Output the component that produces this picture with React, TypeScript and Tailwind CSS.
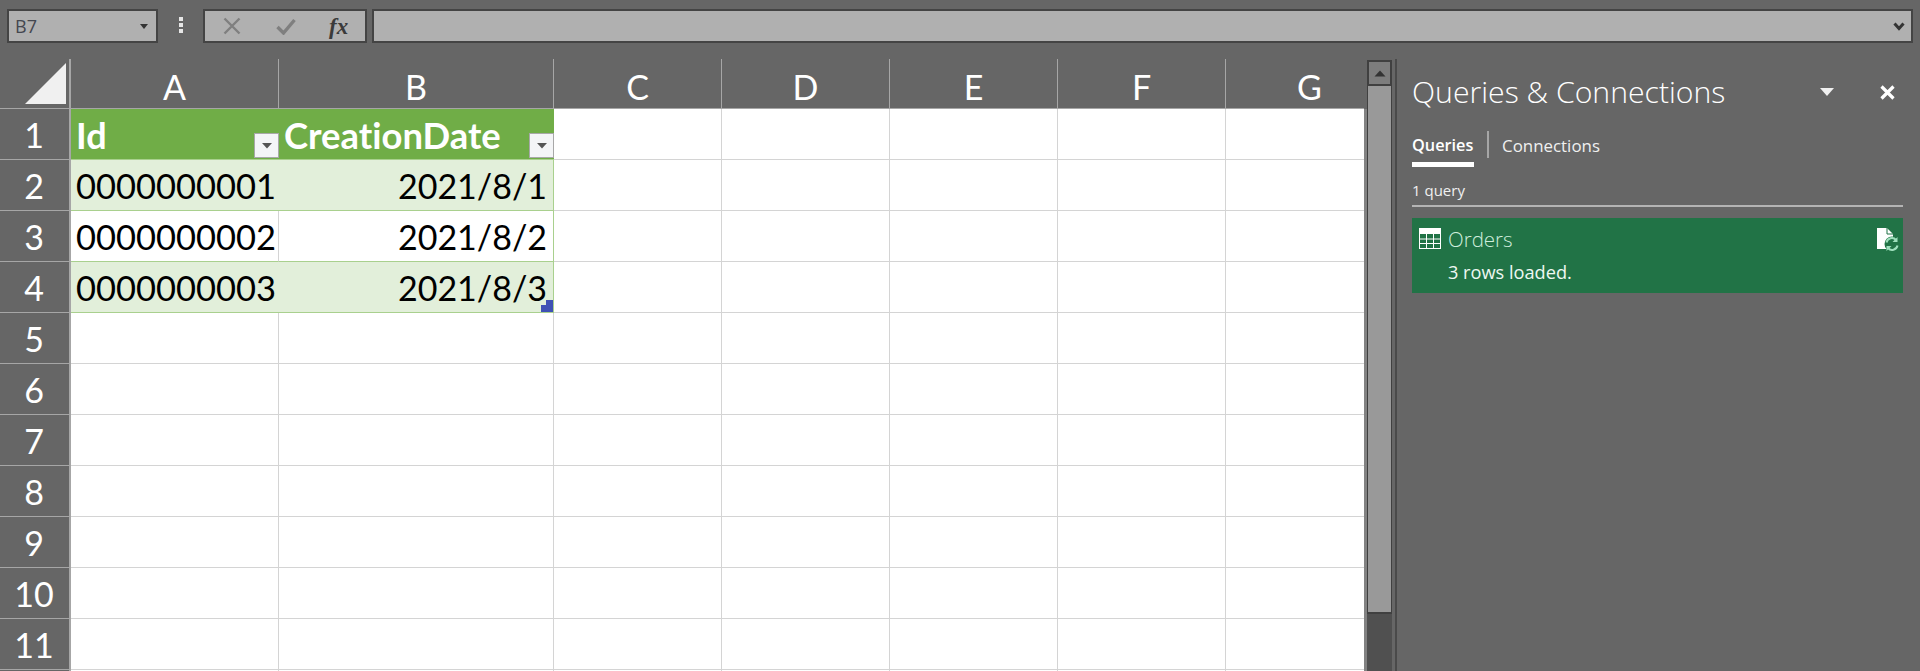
import React from "react";

const cols = ["A", "B", "C", "D", "E", "F", "G"];
const gridCols = "grid w-[1394px] grid-cols-[71px_208px_275px_168px_168px_168px_168px_168px]";
const rows = [2, 3, 4, 5, 6, 7, 8, 9, 10, 11, 12];
const data: Record<number, [string, string]> = {
  2: ["0000000001", "2021/8/1"],
  3: ["0000000002", "2021/8/2"],
  4: ["0000000003", "2021/8/3"],
};

function FilterButton() {
  return (
    <div className="absolute right-0 bottom-[1px] flex h-[25px] w-[25px] items-center justify-center border border-[#a8a8a8] bg-[#f4f5f7]">
      <svg width="12" height="7" viewBox="0 0 12 7">
        <path d="M1 1h10L6 6.5z" fill="#555" />
      </svg>
    </div>
  );
}

function RowHeader({ n }: { n: number }) {
  return (
    <div className="flex h-[51px] items-end justify-center border-r-2 border-b border-[#a6a6a6] bg-[#666666] pr-[1px] pb-[3px] text-[34px] leading-[42px] text-white">
      {n < 12 ? n : ""}
    </div>
  );
}

function Sheet() {
  return (
    <div className="h-[612px] w-[1364px] shrink-0 overflow-hidden font-['Lato',sans-serif]">
      <div className={`${gridCols} h-[50px]`}>
        <div className="flex items-end justify-end border-r-2 border-b border-[#a6a6a6] pr-[2px] pb-[3px]">
          <svg width="43" height="43" viewBox="0 0 43 43">
            <path d="M42 1v41H1z" fill="#f0f0f0" />
          </svg>
        </div>
        {cols.map((c) => (
          <div key={c} className="flex items-end justify-center border-r border-b border-[#a6a6a6] text-[34px] leading-[42px] text-white">
            {c}
          </div>
        ))}
      </div>

      <div className={gridCols}>
        <RowHeader n={1} />
        <div className="relative flex h-[51px] items-end border-b border-[#a9d08e] bg-[#70ad47] pb-[3px] pl-[5px] text-[36px] leading-[42px] font-bold text-white [font-variant-ligatures:none]">
          Id
          <FilterButton />
        </div>
        <div className="relative flex h-[51px] items-end border-b border-[#a9d08e] bg-[#70ad47] pb-[3px] pl-[5px] text-[36.4px] leading-[42px] font-bold text-white [font-variant-ligatures:none]">
          CreationDate
          <FilterButton />
        </div>
        {[0, 1, 2, 3, 4].map((i) => (
          <div key={i} className="h-[51px] border-r border-b border-[#d4d4d4] bg-white" />
        ))}
      </div>

      {rows.map((n) => {
        const d = data[n];
        const band = n === 2 || n === 4;
        return (
          <div key={n} className={gridCols}>
            <RowHeader n={n} />
            <div
              className={`flex h-[51px] items-end pb-[3px] pl-[5px] text-[34.5px] leading-[42px] text-black ${
                d ? "border-b border-[#a9d08e]" : "border-r border-b border-[#d4d4d4]"
              } ${band ? "bg-[#e2efda]" : "bg-white"} ${n === 3 ? "border-r border-r-[#d4d4d4]" : ""}`}
            >
              {d ? d[0] : ""}
            </div>
            <div
              className={`relative flex h-[51px] items-end justify-end pr-[6px] pb-[3px] text-[34px] leading-[42px] text-black ${
                d ? "border-r border-b border-[#a9d08e]" : "border-r border-b border-[#d4d4d4]"
              } ${band ? "bg-[#e2efda]" : "bg-white"}`}
            >
              {d ? d[1] : ""}
              {n === 4 && (
                <svg className="absolute right-0 bottom-0" width="12" height="12" viewBox="0 0 12 12">
                  <path d="M5 0h7v12H0V5h5z" fill="#3f51b5" />
                </svg>
              )}
            </div>
            {[0, 1, 2, 3, 4].map((i) => (
              <div key={i} className="h-[51px] border-r border-b border-[#d4d4d4] bg-white" />
            ))}
          </div>
        );
      })}
    </div>
  );
}

function Scrollbar() {
  return (
    <div className="flex h-[612px] shrink-0">
      <div className="mt-[50px] w-[3px] bg-[#828282]" />
      <div className="mt-[1px] flex w-[25px] flex-col bg-[#505050]">
        <div className="flex h-[26px] shrink-0 items-center justify-center border-2 border-[#404040] bg-[#7d7d7d]">
          <svg width="12" height="7" viewBox="0 0 12 7">
            <path d="M6 0.5l5.5 6H0.5z" fill="#333" />
          </svg>
        </div>
        <div className="h-[528px] shrink-0 border-x border-b-2 border-[#404040] bg-[#999999]" />
      </div>
    </div>
  );
}

function Panel() {
  return (
    <div className="ml-[3px] flex h-[612px] flex-1 flex-col border-l-2 border-[#4a4a4a] pr-[17px] pl-[15px] font-['Open_Sans',sans-serif] text-white">
      <div className="flex h-[66px] items-center">
        <div className="flex-1 text-[30.2px] leading-[38px] font-light whitespace-nowrap">Queries &amp; Connections</div>
        <svg className="mr-[46px]" width="14" height="8" viewBox="0 0 14 8">
          <path d="M0 0h14L7 8z" fill="#f0f0f0" />
        </svg>
        <svg className="mr-[8px]" width="15" height="15" viewBox="0 0 15 15">
          <path d="M1.5 1.5l12 12M13.5 1.5l-12 12" stroke="#ffffff" strokeWidth="3.2" />
        </svg>
      </div>
      <div className="mt-[6px] flex h-[27px] items-center">
        <div className="relative top-[1px] w-[62px] text-[16.3px] font-semibold whitespace-nowrap">Queries</div>
        <div className="mr-[13px] ml-[13px] h-[27px] w-[2px] bg-[#a6a6a6]" />
        <div className="relative top-[1px] text-[16.9px] text-[#f0f0f0]">Connections</div>
      </div>
      <div className="mt-[4px] h-[5px] w-[62px] bg-white" />
      <div className="mt-[11px] h-[27px] text-[15px] leading-[24px] text-[#f0f0f0]">1 query</div>
      <div className="h-[2px] bg-[#b4b4b4]" />
      <div className="mt-[11px] flex h-[75px] bg-[#217346] pt-[10px] pr-[4px] pl-[7px]">
        <svg className="mr-[7px] shrink-0" width="22" height="21" viewBox="0 0 22 21">
          <rect x="0.5" y="0.5" width="21" height="20" fill="none" stroke="#fff" />
          <rect x="0" y="0" width="22" height="6" fill="#fff" />
          <path d="M0 11h22M0 15.5h22M7.5 6v15M14.5 6v15" stroke="#fff" strokeWidth="1" />
        </svg>
        <div className="flex-1">
          <div className="text-[20.5px] leading-[22px] font-light text-[#cfeedd]">Orders</div>
          <div className="mt-[10px] text-[18.2px] leading-[24px] text-[#eef8f2]">3 rows loaded.</div>
        </div>
        <svg className="shrink-0" width="22" height="24" viewBox="0 0 22 24">
          <path d="M0 0h10l6 6v15H0z" fill="#fff" />
          <path d="M10 0v6h6" fill="none" stroke="#217346" strokeWidth="1" />
          <circle cx="15" cy="16" r="7.5" fill="#217346" />
          <path d="M9.5 14.5a5.5 5.5 0 0 1 9.5-2.5M20.5 17.5a5.5 5.5 0 0 1-9.5 2.5" fill="none" stroke="#9fe0bd" strokeWidth="2" />
          <path d="M20.5 9v5h-5zM9.5 23v-5h5z" fill="#9fe0bd" />
        </svg>
      </div>
    </div>
  );
}

export default function App() {
  return (
    <div className="flex h-[671px] w-[1920px] flex-col overflow-hidden bg-[#666666]">
      <div className="flex h-[59px] shrink-0 items-start pt-[9px] pl-[7px] font-['Open_Sans',sans-serif]">
        <div className="flex h-[34px] w-[151px] items-center justify-between border-2 border-[#444444] bg-[#b0b0b0] pr-[8px] pl-[6px] text-[18px] text-[#44474f]">
          B7
          <svg width="8" height="5" viewBox="0 0 8 5">
            <path d="M0 0h8L4 5z" fill="#333" />
          </svg>
        </div>
        <div className="mx-[20px] flex w-[5px] flex-col items-center gap-[2px] pt-[8px]">
          <div className="h-[4px] w-[4px] bg-[#e6e6e6]" />
          <div className="h-[4px] w-[4px] bg-[#e6e6e6]" />
          <div className="h-[4px] w-[4px] bg-[#e6e6e6]" />
        </div>
        <div className="flex h-[34px] w-[164px] items-center border-2 border-[#444444] bg-[#b0b0b0]">
          <svg className="ml-[18px]" width="18" height="18" viewBox="0 0 18 18">
            <path d="M1.5 1.5l15 15M16.5 1.5l-15 15" stroke="#7f7f7f" strokeWidth="2.4" />
          </svg>
          <svg className="ml-[35px]" width="20" height="17" viewBox="0 0 20 17">
            <path d="M1.5 9l6 6L18.5 2" fill="none" stroke="#7f7f7f" strokeWidth="3.4" />
          </svg>
          <span className="ml-[33px] font-['Liberation_Serif',serif] text-[23px] leading-none font-bold text-[#3a3a3a] italic">fx</span>
        </div>
        <div className="ml-[5px] flex h-[34px] w-[1541px] items-center justify-end border-2 border-[#444444] bg-[#b0b0b0] pr-[6px]">
          <svg width="12" height="9" viewBox="0 0 12 9">
            <path d="M1.5 1.5L6 6.5l4.5-5" fill="none" stroke="#333" strokeWidth="3" />
          </svg>
        </div>
      </div>
      <div className="flex min-h-0 flex-1">
        <Sheet />
        <Scrollbar />
        <Panel />
      </div>
    </div>
  );
}
